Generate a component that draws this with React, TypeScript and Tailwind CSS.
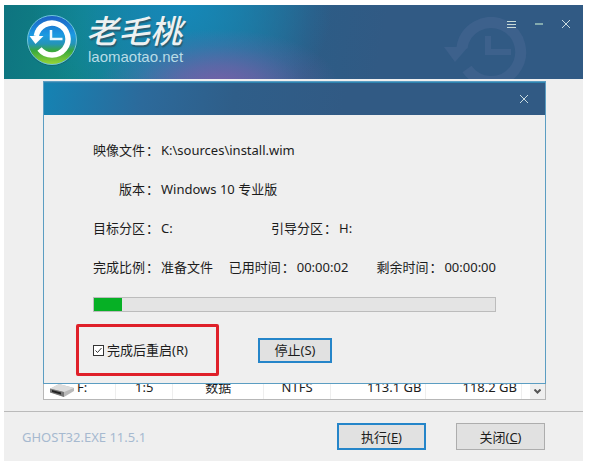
import type { ReactNode } from "react";

function Field({ label, children, className = "" }: { label: string; children: ReactNode; className?: string }) {
  return (
    <div className={`flex items-center whitespace-nowrap ${className}`}>
      <dt className="flex w-[65px] justify-end">
        {label}
        <span className="w-[13px] font-['Noto_Sans_CJK_SC',sans-serif] pl-px">：</span>
      </dt>
      <dd className="ml-[3px]">{children}</dd>
    </div>
  );
}

function LogoMark() {
  return (
    <svg viewBox="0 0 52 52" className="h-[52px] w-[52px] shrink-0" aria-hidden="true">
      <defs>
        <linearGradient id="disc" x1="0" y1="0" x2="0" y2="1">
          <stop offset="0" stopColor="#1c5fc4" />
          <stop offset="0.4" stopColor="#1b9ae2" />
          <stop offset="0.58" stopColor="#2594b8" />
          <stop offset="0.72" stopColor="#38a83d" />
          <stop offset="1" stopColor="#9ad635" />
        </linearGradient>
      </defs>
      <circle cx="26" cy="27" r="25" fill="#155d6c" opacity="0.6" />
      <circle cx="26" cy="26" r="24.5" fill="url(#disc)" stroke="#6fc6dc" strokeWidth="1" />
      <path d="M10.300 22A16 16 0 1 1 13.500 35" fill="none" stroke="#fff" strokeWidth="5.5" />
      <path d="M3.500 22H17.500L9.500 30Z" fill="#fff" />
      <path d="M25 16V25H36.500" fill="none" stroke="#eefaff" strokeWidth="2.5" />
    </svg>
  );
}

function Watermark() {
  return (
    <svg viewBox="0 0 84 62" className="absolute bottom-0 right-[55px] h-[62px] w-[84px]" aria-hidden="true">
      <g fill="none" stroke="#3d618c">
        <path d="M17.900 31A29.500 29.500 0 1 1 23 52" strokeWidth="11" />
        <path d="M44 19V35H67" strokeWidth="6" />
      </g>
      <path d="M0 30H24L11 45Z" fill="#3d618c" />
    </svg>
  );
}

function CloseIcon() {
  return (
    <svg viewBox="0 0 8 8" className="h-2 w-2" stroke="#c9dbe0" strokeWidth="1" aria-hidden="true">
      <path d="M0 0L8 8M8 0L0 8" />
    </svg>
  );
}

function Header() {
  return (
    <header className="relative flex h-[74px] justify-between overflow-hidden bg-[#315a84] bg-[radial-gradient(ellipse_120px_56px_at_215px_80px,#7560a8_0%,#7560a8b0_35%,#7560a840_70%,transparent_100%),radial-gradient(ellipse_150px_130px_at_178px_0px,#1588b8_0%,#1588b8a0_40%,transparent_100%),linear-gradient(100deg,#0e7480_0%,#108386_14%,#1c7c98_26%,#2c5c86_52%,#315a84_65%)]">
      <Watermark />
      <div className="flex pl-[22px] pt-[9px]">
        <LogoMark />
        <div className="ml-2 text-[#edf1f2]">
          <h1 className="font-['Liberation_Sans','Noto_Sans_CJK_SC',sans-serif] text-[32px] font-medium italic leading-[36px] [text-shadow:1px_2px_1px_#285c70]">老毛桃</h1>
          <p className="ml-0.5 font-['Liberation_Sans',sans-serif] text-[15px] leading-[14px] text-[#b8dce6]">laomaotao.net</p>
        </div>
      </div>
      <div className="relative flex h-[38px] items-center gap-[19px] pr-[13px]">
        <button aria-label="菜单">
          <svg viewBox="0 0 9 9" className="h-[9px] w-[9px]" stroke="#c9dbd8" aria-hidden="true">
            <path d="M0 1.500H9M0 4.500H9M0 7.500H9" />
          </svg>
        </button>
        <button aria-label="最小化">
          <svg viewBox="0 0 8 8" className="h-2 w-2" stroke="#83aaae" strokeWidth="2" aria-hidden="true">
            <path d="M0 4H8" />
          </svg>
        </button>
        <button aria-label="关闭窗口">
          <CloseIcon />
        </button>
      </div>
    </header>
  );
}

function Dialog() {
  return (
    <section role="dialog" aria-label="还原进度" className="border border-solid border-[#5b9dc2] bg-[#efefef]">
      <div className="flex h-[33px] items-center justify-end border-t border-[#2d84b0] bg-[linear-gradient(100deg,#1583b3_0%,#2c6a9b_20%,#2f5e89_38%,#315a84_60%)] pr-[17px]">
        <button aria-label="关闭对话框">
          <CloseIcon />
        </button>
      </div>
      <dl className="px-[49px] pt-[15px]">
        <div className="flex h-[39px] items-center"><Field label="映像文件">K:\sources\install.wim</Field></div>
        <div className="flex h-[39px] items-center"><Field label="版本">Windows 10 专业版</Field></div>
        <div className="flex h-[39px] items-center">
          <Field label="目标分区" className="w-[178px]">C:</Field>
          <Field label="引导分区">H:</Field>
        </div>
        <div className="flex h-[39px] items-center">
          <Field label="完成比例" className="w-[137px]">准备文件</Field>
          <Field label="已用时间" className="w-[149px]">00:00:02</Field>
          <Field label="剩余时间">00:00:00</Field>
        </div>
      </dl>
      <div className="mx-[49px] mt-[11px] h-[15px] border border-[#bcbcbc] bg-[#e4e4e4]" role="progressbar" aria-label="完成比例" aria-valuenow={7} aria-valuemin={0} aria-valuemax={100}>
        <div className="h-full w-[7%] bg-[#06b025]" />
      </div>
      <div className="flex items-center px-8 pb-[7px] pt-3">
        <label className="flex h-[52px] w-[143px] items-center rounded-xs border-3 border-[#df2029] pl-3.5">
          <input type="checkbox" defaultChecked className="peer h-[11px] w-[11px] appearance-none border border-[#333] bg-white" />
          <svg viewBox="0 0 11 11" className="pointer-events-none -ml-[11px] hidden h-[11px] w-[11px] peer-checked:block" fill="none" stroke="#333" aria-hidden="true">
            <path d="M2.500 5.500L4.500 7.500L8.500 3" />
          </svg>
          <span className="ml-[3px]">完成后重启(R)</span>
        </label>
        <button className="ml-[39px] h-[25px] w-[74px] border-2 border-[#2585c9] bg-[#e1e1e1] leading-[20px]">停止(S)</button>
      </div>
    </section>
  );
}

function DriveIcon() {
  return (
    <svg viewBox="0 0 24 13" className="h-[13px] w-6" aria-hidden="true">
      <path d="M0 5L9 0L24 4V7L14 13L0 8Z" fill="#b9b9b9" />
      <path d="M0 4.500L9 0L24 4L14 8Z" fill="#dcdcdc" />
      <path d="M0 4.500L14 8V13L0 8.500Z" fill="#777" />
      <path d="M2 6L11 8.500V10.500L2 8Z" fill="#222" />
    </svg>
  );
}

function PartitionList() {
  return (
    <div className="flex h-4 items-end overflow-hidden border border-t-0 border-[#b7b7b7] bg-white">
      <table className="mr-auto w-full table-fixed border-collapse">
        <colgroup>
          <col className="w-[15%]" />
          <col className="w-[12%]" />
          <col className="w-[19%]" />
          <col className="w-[14%]" />
          <col className="w-[20%]" />
          <col className="w-[20%]" />
        </colgroup>
        <tbody>
          <tr className="text-center leading-6 *:h-6 *:border-r *:border-[#eee] *:p-0">
            <td>
              <div className="flex items-center gap-[3px] pl-1.5">
                <span className="flex h-6 items-end pb-0.5"><DriveIcon /></span>
                F:
              </div>
            </td>
            <td>1:5</td>
            <td>数据</td>
            <td>NTFS</td>
            <td className="pr-1! text-right">113.1 GB</td>
            <td className="pr-1! text-right">118.2 GB</td>
          </tr>
        </tbody>
      </table>
      <button aria-label="向下滚动" className="ml-2 flex h-[15px] w-[15px] shrink-0 items-center justify-center bg-[#efefef]">
        <svg viewBox="0 0 7 5" className="h-[5px] w-[7px]" fill="none" stroke="#555" strokeWidth="2" aria-hidden="true">
          <path d="M.5 .5L3.500 3.500L6.500 .5" />
        </svg>
      </button>
    </div>
  );
}

export default function App() {
  return (
    <div className="min-h-screen bg-white pb-1 pl-1 pr-2 pt-[5px] font-['Noto_Sans','Noto_Sans_CJK_SC',sans-serif] text-[13px] leading-[18px] text-[#1c1c1c]">
      <div className="bg-[#efefef]">
        <Header />
        <main className="pb-[11px] pl-[39px] pr-[37px] pt-0.5">
          <Dialog />
          <PartitionList />
        </main>
        <footer className="flex h-[50px] items-center border-t border-[#bababa] pl-[18px] pr-[38px]">
          <span className="mr-auto text-[#a6b9cf]">GHOST32.EXE 11.5.1</span>
          <button className="h-[27px] w-[89px] border-2 border-[#2585c9] bg-[#e1e1e1]">执行(<u>E</u>)</button>
          <button className="ml-[30px] h-[27px] w-[89px] border border-[#adadad] bg-[#e1e1e1]">关闭(<u>C</u>)</button>
        </footer>
      </div>
    </div>
  );
}
